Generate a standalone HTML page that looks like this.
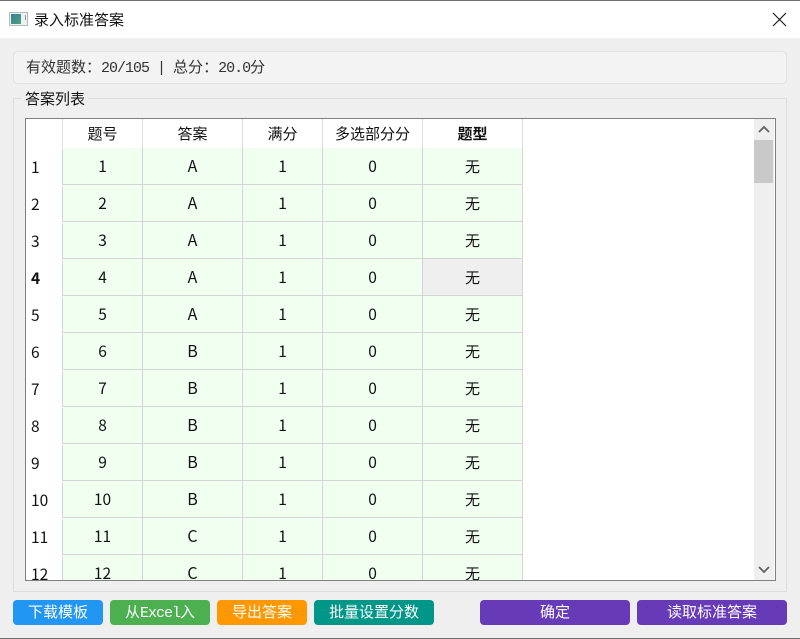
<!DOCTYPE html>
<html lang="zh">
<head>
<meta charset="utf-8">
<title>录入标准答案</title>
<style>
html,body{margin:0;padding:0}
body{position:relative;width:800px;height:639px;overflow:hidden;background:#efefef;font-family:"Liberation Sans","Noto Sans CJK SC",sans-serif;color:#111}
.abs{position:absolute}
i{font-style:normal;font-family:"Liberation Mono",monospace;font-size:15px;letter-spacing:-1px}
u{text-decoration:none;font-family:"Noto Sans CJK TC",sans-serif}
#top{left:0;top:0;width:800px;height:38px;background:#fff;border-top:1px solid #707070;box-sizing:border-box}
#bot{left:0;top:638px;width:800px;height:1px;background:#707070}
#title{left:34px;top:9px;font:15px/21px "Noto Sans CJK SC",sans-serif;color:#111}
#status{left:13px;top:51px;width:774px;height:33px;box-sizing:border-box;background:#f3f3f3;border:1px solid #e2e2e2;border-radius:5px;padding-left:12px;font:15px/29px "WenQuanYi Zen Hei",sans-serif;color:#333;white-space:pre}
#group{left:13px;top:98px;width:774px;height:494px;box-sizing:border-box;border:1px solid #dcdcdc}
#glabel{left:22px;top:89px;padding:0 3px;background:#efefef;font:15px/20px "Noto Sans CJK SC",sans-serif;color:#111}
#tbl{left:25px;top:118px;width:751px;height:463px;box-sizing:border-box;border:1px solid #808080;background:#fff;overflow:hidden}
.r{position:absolute;left:0;width:497px;height:37px;font:15.5px/37px "Noto Sans CJK SC",sans-serif;color:#111}
.r .e{font-size:15px}
.r .b{font-size:16px;line-height:35px}
.r div{position:absolute;top:0;height:36px;text-align:center;background:#f0fff0;border-right:1px solid #d4d4d4;border-bottom:1px solid #d4d4d4}
.h{position:absolute;left:0;top:0;width:497px;height:29px;font:15px/30px "Noto Sans CJK SC",sans-serif;color:#111}
.h div{position:absolute;top:0;height:29px;text-align:center;background:#fff;border-right:1px solid #dedede}
.n{left:0;background:#fff!important;border-bottom:0!important;text-align:left!important;padding-left:5px;box-sizing:border-box;width:37px!important;top:1px!important;border-right:1px solid #d4d4d4}
.a{left:37px;width:79px}
.b{left:117px;width:99px}
.c{left:217px;width:79px}
.d{left:297px;width:99px}
.e{left:397px;width:99px}
#sb{left:754px;top:119px;width:20px;height:461px;background:#efefef}
#thumb{left:754px;top:140px;width:19px;height:43px;background:#c9c9c9}
.btn{position:absolute;top:600px;height:25px;border-radius:4px;color:#fff;text-align:center;font:15px/26px "WenQuanYi Zen Hei",sans-serif}
</style>
</head>
<body>
<div class="abs" id="top"></div>
<svg class="abs" style="left:9px;top:12px" width="20" height="15" viewBox="0 0 20 15"><defs><linearGradient id="g" x1="0" y1="0" x2="1" y2="1"><stop offset="0" stop-color="#3f7f9c"/><stop offset="1" stop-color="#4aa07a"/></linearGradient></defs><rect x="0.5" y="0.5" width="18" height="13" fill="#eef1f2" stroke="#b4babd"/><rect x="2" y="2" width="10" height="10" fill="url(#g)"/><rect x="16" y="3" width="1" height="5" fill="#8a9ea5"/></svg>
<div class="abs" id="title">录入标准答案</div>
<svg class="abs" style="left:772px;top:12px" width="15" height="15" viewBox="0 0 15 15"><path d="M1 1L14 14M14 1L1 14" stroke="#111" stroke-width="1.1" fill="none"/></svg>

<div class="abs" id="status">有效题数<u>：</u><i>20/105 | </i>总分<u>：</u><i>20.0</i>分</div>
<div class="abs" id="group"></div>
<div class="abs" id="glabel">答案列表</div>

<div class="abs" id="tbl">
  <div class="h"><div class="n" style="border-right:1px solid #dedede;top:0!important"></div><div class="a">题号</div><div class="b">答案</div><div class="c">满分</div><div class="d">多选部分分</div><div class="e" style="font-weight:700">题型</div></div>
  <div class="r" style="top:29px"><div class="n">1</div><div class="a">1</div><div class="b">A</div><div class="c">1</div><div class="d">0</div><div class="e">无</div></div>
  <div class="r" style="top:66px"><div class="n">2</div><div class="a">2</div><div class="b">A</div><div class="c">1</div><div class="d">0</div><div class="e">无</div></div>
  <div class="r" style="top:103px"><div class="n">3</div><div class="a">3</div><div class="b">A</div><div class="c">1</div><div class="d">0</div><div class="e">无</div></div>
  <div class="r" style="top:140px"><div class="n" style="font-weight:700">4</div><div class="a">4</div><div class="b">A</div><div class="c">1</div><div class="d">0</div><div class="e" style="background:#efefef">无</div></div>
  <div class="r" style="top:177px"><div class="n">5</div><div class="a">5</div><div class="b">A</div><div class="c">1</div><div class="d">0</div><div class="e">无</div></div>
  <div class="r" style="top:214px"><div class="n">6</div><div class="a">6</div><div class="b">B</div><div class="c">1</div><div class="d">0</div><div class="e">无</div></div>
  <div class="r" style="top:251px"><div class="n">7</div><div class="a">7</div><div class="b">B</div><div class="c">1</div><div class="d">0</div><div class="e">无</div></div>
  <div class="r" style="top:288px"><div class="n">8</div><div class="a">8</div><div class="b">B</div><div class="c">1</div><div class="d">0</div><div class="e">无</div></div>
  <div class="r" style="top:325px"><div class="n">9</div><div class="a">9</div><div class="b">B</div><div class="c">1</div><div class="d">0</div><div class="e">无</div></div>
  <div class="r" style="top:362px"><div class="n">10</div><div class="a">10</div><div class="b">B</div><div class="c">1</div><div class="d">0</div><div class="e">无</div></div>
  <div class="r" style="top:399px"><div class="n">11</div><div class="a">11</div><div class="b">C</div><div class="c">1</div><div class="d">0</div><div class="e">无</div></div>
  <div class="r" style="top:436px"><div class="n">12</div><div class="a">12</div><div class="b">C</div><div class="c">1</div><div class="d">0</div><div class="e">无</div></div>
</div>
<div class="abs" id="sb"></div>
<div class="abs" id="thumb"></div>
<svg class="abs" style="left:758px;top:125px" width="12" height="9" viewBox="0 0 12 9"><path d="M1 7L6 2L11 7" stroke="#606060" stroke-width="1.8" fill="none"/></svg>
<svg class="abs" style="left:758px;top:565px" width="12" height="9" viewBox="0 0 12 9"><path d="M1 2L6 7L11 2" stroke="#606060" stroke-width="1.8" fill="none"/></svg>

<div class="btn" style="left:13px;width:90px;background:#2196f3">下载模板</div>
<div class="btn" style="left:110px;width:100px;background:#4caf50">从<i>Excel</i>入</div>
<div class="btn" style="left:217px;width:90px;background:#ff9800">导出答案</div>
<div class="btn" style="left:314px;width:120px;background:#009688">批量设置分数</div>
<div class="btn" style="left:480px;width:150px;background:#673ab7">确定</div>
<div class="btn" style="left:637px;width:150px;background:#673ab7">读取标准答案</div>
<div class="abs" id="bot"></div>
</body>
</html>
